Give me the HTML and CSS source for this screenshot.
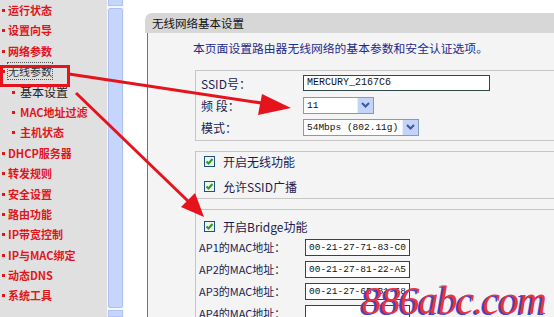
FILE: index.html
```html
<!DOCTYPE html>
<html>

<head>
  <meta charset="utf-8">
  <title>无线网络基本设置</title>
  <link rel="stylesheet" href="styles.css">
</head>

<body>
  <div class="page">
    <div class="sidebar">
      <ul class="menu">
        <li class="item">运行状态</li>
        <li class="item">设置向导</li>
        <li class="item">网络参数</li>
        <li class="item current"><span class="focus">无线参数</span></li>
        <li class="sub active">基本设置</li>
        <li class="sub">MAC地址过滤</li>
        <li class="sub">主机状态</li>
        <li class="item">DHCP服务器</li>
        <li class="item">转发规则</li>
        <li class="item">安全设置</li>
        <li class="item">路由功能</li>
        <li class="item">IP带宽控制</li>
        <li class="item">IP与MAC绑定</li>
        <li class="item">动态DNS</li>
        <li class="item">系统工具</li>
      </ul>
    </div>

    <div class="scrollbar">
      <div class="scroll-btn"></div>
      <div class="scroll-thumb"></div>
      <div class="scroll-btn"></div>
    </div>

    <div class="main">
      <div class="panel-head">无线网络基本设置</div>
      <div class="panel-body">
        <p class="desc">本页面设置路由器无线网络的基本参数和安全认证选项。</p>

        <div class="box box-basic">
          <div class="row">
            <span class="label">SSID号：</span>
            <span class="input ssid">MERCURY_2167C6</span>
          </div>
          <div class="row">
            <span class="label">频&nbsp;段：</span>
            <span class="select channel">11<span class="arrow"><svg width="9" height="6" viewBox="0 0 9 6"><path d="M1 1 L4.5 4.5 L8 1" fill="none" stroke="#3d5a96" stroke-width="2"/></svg></span></span>
          </div>
          <div class="row">
            <span class="label">模式：</span>
            <span class="select mode">54Mbps (802.11g)<span class="arrow"><svg width="9" height="6" viewBox="0 0 9 6"><path d="M1 1 L4.5 4.5 L8 1" fill="none" stroke="#3d5a96" stroke-width="2"/></svg></span></span>
          </div>
        </div>

        <div class="box box-checks">
          <div class="check-row">
            <span class="check"><svg width="9" height="9" viewBox="0 0 9 9"><path d="M1.5 4.5 L3.5 6.5 L7.5 2" fill="none" stroke="#21a121" stroke-width="2"/></svg></span>
            <span>开启无线功能</span>
          </div>
          <div class="check-row">
            <span class="check"><svg width="9" height="9" viewBox="0 0 9 9"><path d="M1.5 4.5 L3.5 6.5 L7.5 2" fill="none" stroke="#21a121" stroke-width="2"/></svg></span>
            <span>允许SSID广播</span>
          </div>
        </div>

        <div class="box box-bridge">
          <div class="check-row">
            <span class="check"><svg width="9" height="9" viewBox="0 0 9 9"><path d="M1.5 4.5 L3.5 6.5 L7.5 2" fill="none" stroke="#21a121" stroke-width="2"/></svg></span>
            <span>开启Bridge功能</span>
          </div>
          <div class="mac-row">
            <span class="mac-label">AP1的MAC地址：</span>
            <span class="input mac">00-21-27-71-83-C0</span>
          </div>
          <div class="mac-row">
            <span class="mac-label">AP2的MAC地址：</span>
            <span class="input mac">00-21-27-81-22-A5</span>
          </div>
          <div class="mac-row">
            <span class="mac-label">AP3的MAC地址：</span>
            <span class="input mac">00-21-27-65-B1-68</span>
          </div>
          <div class="mac-row">
            <span class="mac-label">AP4的MAC地址：</span>
            <span class="input mac"></span>
          </div>
        </div>
      </div>
    </div>

    <!-- annotation drawn over the screenshot -->
    <svg class="marks" width="554" height="317" viewBox="0 0 554 317">
      <rect x="1.5" y="66.5" width="67" height="19" fill="none" stroke="#e5141c" stroke-width="3"/>
      <line x1="69" y1="74" x2="268" y2="104" stroke="#e5141c" stroke-width="3"/>
      <polygon points="291,108 262,94 258,115" fill="#e5141c"/>
      <line x1="76" y1="93" x2="190" y2="203" stroke="#e5141c" stroke-width="3"/>
      <polygon points="204,217 181,207 195,193" fill="#e5141c"/>
    </svg>

    <div class="watermark">886abc.com</div>
  </div>
</body>

</html>
```

FILE: styles.css
```css
body {
  margin: 0;
  padding: 0;
  background-color: #fff;
  font-family: "Noto Sans CJK SC", "DejaVu Sans", sans-serif;
  font-size: 12px;
  overflow: hidden;
}

.page {
  position: relative;
  display: flex;
  width: 554px;
  height: 317px;
  overflow: hidden;
}

/* left menu */
.sidebar {
  width: 107px;
  flex-shrink: 0;
  background-color: #e1e0e0;
}

.menu {
  list-style: none;
  margin: 0;
  padding: 0;
}

.menu li {
  height: 20.4px;
  line-height: 20.4px;
  font-size: 11px;
  font-weight: bold;
  color: #e0161c;
  white-space: nowrap;
}

.item {
  padding-left: 8px;
  position: relative;
}

.item::before {
  content: "";
  position: absolute;
  left: 2px;
  top: 9px;
  width: 3px;
  height: 3px;
  background-color: #e0161c;
}

.sub {
  padding-left: 20px;
  position: relative;
}

.sub::before {
  content: "";
  position: absolute;
  left: 12px;
  top: 9px;
  width: 3px;
  height: 3px;
  background-color: #e0161c;
}

.sub.active {
  color: #222;
  font-weight: normal;
  font-size: 12px;
}

.current .focus {
  color: #333;
  font-weight: normal;
  outline: 1px dotted #555;
}

/* fake scrollbar */
.scrollbar {
  width: 17px;
  flex-shrink: 0;
  display: flex;
  flex-direction: column;
  gap: 2px;
  padding: 0 1px;
  box-sizing: border-box;
  background-color: #f5f7fd;
}

.scroll-btn {
  height: 5px;
  background-color: #c6d5fb;
  border: 1px solid #b0c3f2;
  border-top: none;
}

.scroll-btn:last-child {
  border-top: 1px solid #b0c3f2;
}

.scroll-thumb {
  flex: 1;
  background-color: #c6d5fb;
  border: 1px solid #aec0ee;
  border-radius: 2px;
}

/* main panel */
.main {
  margin-left: 21px;
  margin-top: 13px;
  width: 430px;
  flex-shrink: 0;
}

.panel-head {
  height: 20px;
  line-height: 20px;
  padding-left: 7px;
  background-color: #d7d7d7;
  border-top-left-radius: 7px;
  color: #111;
  font-size: 11.5px;
}

.panel-body {
  margin-left: 2px;
  border-left: 1px solid #d14a5a;
  background-color: #f4f4f4;
  height: 300px;
  padding-left: 45px;
  padding-top: 8px;
}

.desc {
  margin: 0 0 15px 0;
  height: 14px;
  line-height: 14px;
  color: #1e2a8c;
  font-size: 11.8px;
}

.box {
  border: 1px solid #c6c6c6;
  border-right: none;
  margin-left: 2px;
  margin-bottom: 10px;
  color: #1a1d52;
}

.box-basic {
  padding: 1px 0 2px 5px;
}

.row {
  display: flex;
  align-items: center;
  height: 22px;
}

.label {
  width: 102px;
}

.input {
  height: 16px;
  line-height: 14px;
  box-sizing: border-box;
  background-color: #fff;
  border: 1px solid #2f4a46;
  padding-left: 3px;
  font-family: "Liberation Mono", monospace;
  font-size: 10px;
  color: #111;
  white-space: nowrap;
  overflow: hidden;
}

.ssid {
  width: 187px;
}

.select {
  display: flex;
  align-items: center;
  justify-content: space-between;
  height: 17px;
  box-sizing: border-box;
  border: 1px solid #7f9db9;
  background-color: #fff;
  padding-left: 3px;
  font-family: "Liberation Mono", monospace;
  font-size: 9.5px;
  color: #111;
  white-space: nowrap;
}

.channel {
  width: 71px;
}

.mode {
  width: 116px;
}

.arrow {
  width: 15px;
  height: 15px;
  flex-shrink: 0;
  display: flex;
  align-items: center;
  justify-content: center;
  background-color: #c3d3fa;
  border-left: 1px solid #e7eefe;
}

.box-checks {
  display: flex;
  flex-direction: column;
  gap: 6px;
  padding: 0 0 2px 8px;
}

.check-row {
  display: flex;
  align-items: center;
  gap: 8px;
  height: 19px;
}

.check {
  width: 11px;
  height: 11px;
  box-sizing: border-box;
  border: 1px solid #1c5180;
  background-color: #f3f3ee;
  display: flex;
  align-items: center;
  justify-content: center;
}

.box-bridge {
  padding: 6px 0 0 3px;
}

.box-bridge .check-row {
  padding-left: 5px;
  height: 20px;
}

.mac-row {
  display: flex;
  align-items: center;
  height: 22px;
}

.mac-label {
  width: 106px;
  font-size: 11px;
}

.mac {
  width: 105px;
  height: 17px;
  line-height: 15px;
  font-size: 9.5px;
}

/* overlays */
.marks {
  position: absolute;
  left: 0;
  top: 0;
  pointer-events: none;
}

.watermark {
  position: absolute;
  right: 8px;
  bottom: -3px;
  line-height: 38px;
  font-family: "Liberation Serif", serif;
  font-style: italic;
  font-size: 40px;
  color: #e8343c;
  text-shadow: -2px 1px 0 #3c48d8;
  letter-spacing: -1px;
}
```
